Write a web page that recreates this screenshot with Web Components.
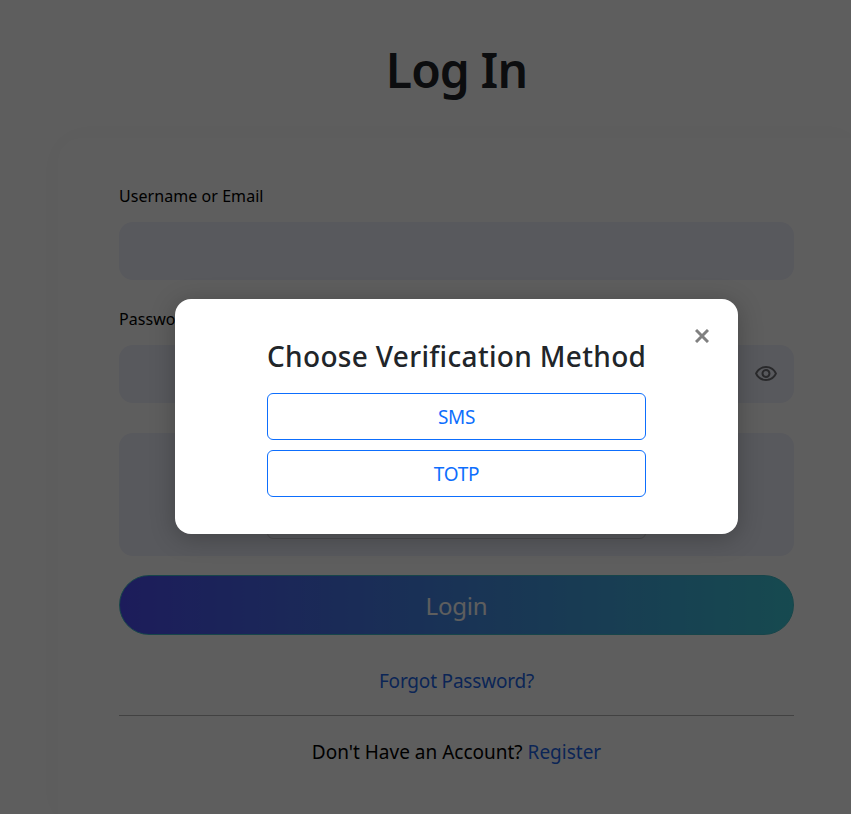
<!DOCTYPE html>
<html lang="en"><head><meta charset="utf-8"><title>Log In</title>
<style>
html,body{margin:0;height:814px;overflow:hidden;background:#fff}
body{font-family:"Noto Sans","Open Sans",sans-serif;color:#212529}
</style></head><body>
<template id="t-field"><style>
:host{display:block}
label{display:block;font-size:16px;line-height:24px;color:#000;letter-spacing:.06px;margin-bottom:14px}
.box{position:relative;height:58px;border-radius:14px;background:#eef0fb;display:flex;align-items:center;justify-content:flex-end;padding-right:16px}
::slotted(svg){width:24px;height:24px;color:#6f7075}
</style><label></label><div class="box"><slot></slot></div></template>

<template id="t-dialog"><style>
:host{position:absolute;inset:0;display:flex;justify-content:center;align-items:flex-start;padding:299px 0 0 62px;background:rgba(0,0,0,.63);box-sizing:border-box}
.d{width:563px;height:235px;box-sizing:border-box;background:#fff;border-radius:16px;box-shadow:0 4px 24px rgba(0,0,0,.25);padding:35px 92px 0;position:relative}
h2{margin:0 0 15px;font-size:28px;font-weight:500;line-height:44px;color:#212529;text-align:center;white-space:nowrap;letter-spacing:.33px;height:44px}
.col{display:flex;flex-direction:column;gap:10px}
button.x{position:absolute;top:30px;right:29px;width:14px;height:14px;padding:0;border:0;background:none;display:flex}
button.x svg{width:14px;height:14px;display:block}
</style><div class="d" role="dialog"><button class="x" aria-label="Close"><svg viewBox="0 0 14 14" fill="none" stroke="#808080" stroke-width="3"><path d="M1 1 13 13M13 1 1 13"/></svg></button><h2></h2><div class="col"><slot></slot></div></div></template>

<template id="t-option"><style>
:host{display:block}
button{display:block;width:100%;height:47px;box-sizing:border-box;background:#fff;border:1px solid #0d6efd;border-radius:6px;color:#0d6efd;font:400 19px/24px "Noto Sans","Open Sans",sans-serif;letter-spacing:-.3px;padding:0}
</style><button><slot></slot></button></template>

<template id="t-card"><style>
:host{display:block;margin-left:58px;box-sizing:border-box;padding:46px 57px 0 61px;height:676px;background:#fff;border-radius:24px 0 0 0;box-shadow:0 0 30px rgba(0,0,0,.04)}
</style><slot></slot></template>

<template id="t-login"><style>
:host{display:block;width:851px;height:814px;position:relative;overflow:hidden}
h1{margin:0;height:138px;box-sizing:border-box;padding:34px 0 0 62px;font-size:48px;line-height:72px;font-weight:600;text-align:center;color:#212529;letter-spacing:-.9px}
.cap{height:123px;border-radius:14px;background:#eef0fb;margin:30px 0 19.5px;box-sizing:border-box;padding:0 148px}
.cap div{height:106px;border:1px solid #c9cad0;border-radius:6px;box-sizing:border-box}
.btn{display:block;width:100%;height:60px;box-sizing:border-box;border:1px solid #3fbcc8;border-radius:30px;background:linear-gradient(90deg,#4d4df6,#3dc8d8);color:#fff;font:400 24px/32px "Noto Sans","Open Sans",sans-serif;letter-spacing:-.2px;padding:2px 0 0}
.links{text-align:center;font-size:19px;line-height:26px;color:#000}
a{color:#2266e8;text-decoration:none}
.forgot{margin-top:33px;letter-spacing:-.19px}
hr{border:0;border-top:1px solid #b4b4b4;margin:21px 0 23px}
.gap{height:26.5px}
</style><h1>Log In</h1><login-card>
<field-box label="Username or Email"></field-box><div class="gap"></div>
<field-box label="Password"><svg viewBox="0 0 24 24" fill="currentColor"><path d="M12 6a9.77 9.77 0 0 1 8.82 5.5C19.17 14.87 15.79 17 12 17s-7.17-2.13-8.82-5.5A9.77 9.77 0 0 1 12 6m0-2C7 4 2.73 7.11 1 11.5 2.73 15.89 7 19 12 19s9.27-3.11 11-7.5C21.27 7.11 17 4 12 4zm0 5a2.5 2.5 0 0 1 0 5 2.5 2.5 0 0 1 0-5m0-2c-2.48 0-4.5 2.02-4.5 4.5S9.52 16 12 16s4.5-2.02 4.5-4.5S14.48 7 12 7z"/></svg></field-box>
<div class="cap"><div></div></div>
<button class="btn">Login</button>
<div class="links forgot"><a href="#">Forgot Password?</a></div><hr>
<div class="links">Don't Have an Account? <a href="#">Register</a></div>
</login-card>
<verify-dialog heading="Choose Verification Method"><verify-option>SMS</verify-option><verify-option>TOTP</verify-option></verify-dialog>
</template>
<login-page></login-page>
<script>
const mk=(name,id,init)=>customElements.define(name,class extends HTMLElement{constructor(){super();this.attachShadow({mode:"open"}).append(document.getElementById(id).content.cloneNode(true))}
connectedCallback(){init&&init(this)}});
mk("field-box","t-field",e=>e.shadowRoot.querySelector("label").textContent=e.getAttribute("label"));
mk("verify-dialog","t-dialog",e=>e.shadowRoot.querySelector("h2").textContent=e.getAttribute("heading"));
mk("verify-option","t-option");
mk("login-card","t-card");
mk("login-page","t-login");
</script></body></html>
